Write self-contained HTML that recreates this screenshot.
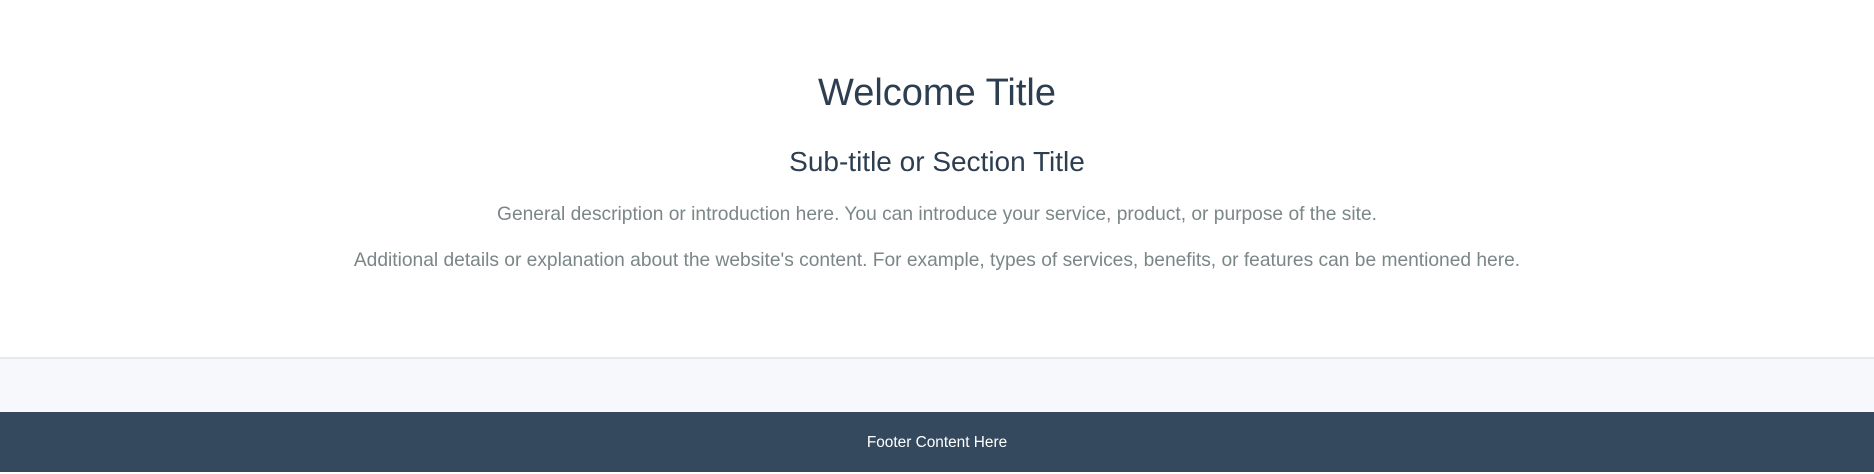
<!DOCTYPE html>
<html><head><meta charset="utf-8"><style>
html,body{margin:0;padding:0;width:1874px;height:472px;overflow:hidden;font-family:"Liberation Sans",Arial,sans-serif;background:#fff}
.main{position:absolute;left:0;top:0;width:1874px;height:357px;background:#fff;border-bottom:2px solid #e8e9ec}
.t{position:absolute;left:0;width:1874px;text-align:center;white-space:nowrap}
h1{font-weight:normal;font-size:38px;color:#2c3e50;margin:0}
h2{font-weight:normal;font-size:28px;color:#2c3e50;margin:0}
p{margin:0;font-size:19.2px;color:#7b8687}
.gray{position:absolute;top:359px;left:0;width:1874px;height:53px;background:#f7f8fb}
footer{position:absolute;top:412px;left:0;width:1874px;height:60px;background:#34495e;color:#fff;font-size:15.4px;text-align:center;line-height:62px}
</style></head><body>
<div class="main">
<h1 class="t" style="top:72px">Welcome Title</h1>
<h2 class="t" style="top:146px">Sub-title or Section Title</h2>
<p class="t" style="top:204px">General description or introduction here. You can introduce your service, product, or purpose of the site.</p>
<p class="t" style="top:250px">Additional details or explanation about the website's content. For example, types of services, benefits, or features can be mentioned here.</p>
</div>
<div class="gray"></div>
<footer>Footer Content Here</footer>
</body></html>
